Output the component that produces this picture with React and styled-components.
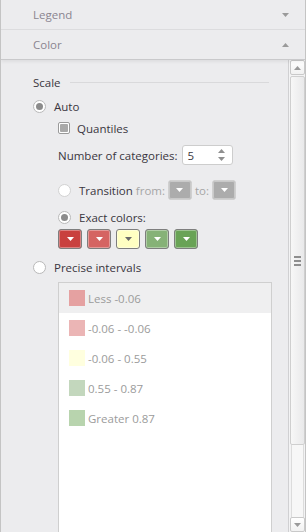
import React from 'react';
import styled, { createGlobalStyle } from 'styled-components';

const GlobalStyle = createGlobalStyle`
  html, body {
    margin: 0;
    padding: 0;
    background: #ffffff;
  }
  body {
    font-family: 'Open Sans', 'Liberation Sans', sans-serif;
    font-size: 11.5px;
  }
`;

const Frame = styled.div`
  width: 306px;
  height: 532px;
  box-sizing: border-box;
  border-left: 1px solid #c4c4c4;
  border-right: 1px solid #c4c4c4;
  background: #ececee;
  display: flex;
  flex-direction: column;
  overflow: hidden;
`;

const SectionHeader = styled.div`
  height: 29px;
  flex: none;
  display: flex;
  align-items: center;
  justify-content: space-between;
  padding: 0 16px 0 32px;
  border-bottom: 1px solid ${(p) => (p.open ? '#c9c9cb' : '#dcdcde')};
  color: #8a8590;
  font-size: 11.5px;
  box-shadow: ${(p) => (p.open ? '0 2px 3px rgba(0,0,0,0.06)' : 'none')};
  position: relative;
  z-index: 1;
`;

const Caret = ({ up }) => (
  <svg width="7" height="4" viewBox="0 0 7 4">
    <path d={up ? 'M0 4 L3.5 0 L7 4 Z' : 'M0 0 L7 0 L3.5 4 Z'} fill="#9a9a9a" />
  </svg>
);

const Body = styled.div`
  flex: 1;
  display: flex;
  min-height: 0;
`;

const Content = styled.div`
  flex: 1;
  padding: 13px 0 0 32px;
  display: flex;
  flex-direction: column;
  color: #3a3640;
`;

const GroupTitle = styled.div`
  display: flex;
  align-items: center;
  gap: 9px;
  height: 18px;
  padding-right: 19px;
  &::after {
    content: '';
    flex: 1;
    height: 1px;
    background: #d9d9db;
  }
`;

const Row = styled.div`
  display: flex;
  align-items: center;
  height: ${(p) => p.h || 20}px;
  margin-top: ${(p) => p.mt || 0}px;
  padding-left: ${(p) => p.indent || 0}px;
`;

const RadioCircle = styled.span`
  width: 11px;
  height: 11px;
  border-radius: 50%;
  border: 1px solid ${(p) => (p.disabled ? '#d2d2d2' : '#b9b9b9')};
  background: #ffffff;
  display: inline-flex;
  align-items: center;
  justify-content: center;
  margin-right: 8px;
  flex: none;
  &::after {
    content: '';
    width: 7px;
    height: 7px;
    border-radius: 50%;
    background: ${(p) => (p.checked ? '#8c8c8c' : 'transparent')};
  }
`;

const CheckBox = styled.span`
  width: 10px;
  height: 10px;
  border-radius: 2px;
  border: 1px solid #9a9a9a;
  background: #ffffff;
  display: inline-flex;
  align-items: center;
  justify-content: center;
  margin-right: 7px;
  flex: none;
  &::after {
    content: '';
    width: 8px;
    height: 8px;
    border-radius: 1px;
    background: #a9a9a9;
  }
`;

const Label = styled.span`
  color: ${(p) => (p.muted ? '#a6a6a6' : '#3a3640')};
  white-space: nowrap;
`;

const Spinner = styled.div`
  width: 51px;
  height: 20px;
  box-sizing: border-box;
  border: 1px solid #cdcdcd;
  border-radius: 3px;
  background: #ffffff;
  display: flex;
  align-items: center;
  justify-content: space-between;
  padding: 0 7px 0 5px;
  margin-left: 4px;
`;

const SpinArrows = () => (
  <svg width="7" height="12" viewBox="0 0 7 12">
    <path d="M0 4 L3.5 0 L7 4 Z" fill="#8f8f8f" />
    <path d="M0 8 L7 8 L3.5 12 Z" fill="#8f8f8f" />
  </svg>
);

const DropButton = styled.div`
  width: 24px;
  height: 20px;
  box-sizing: border-box;
  border-radius: 3px;
  border: 1px solid ${(p) => p.border || '#7e7e7e'};
  background: ${(p) => p.color};
  display: flex;
  align-items: center;
  justify-content: center;
  flex: none;
  box-shadow: inset 0 0 0 1px rgba(255, 255, 255, 0.35);
`;

const DownTri = ({ color = '#ffffff' }) => (
  <svg width="7" height="4" viewBox="0 0 7 4">
    <path d="M0 0 L7 0 L3.5 4 Z" fill={color} />
  </svg>
);

const Swatches = styled.div`
  display: flex;
  gap: 5px;
  padding-left: 25px;
  margin-top: 2px;
`;

const ListBox = styled.div`
  margin: 5px 0 0 25px;
  width: 214px;
  flex: 1;
  box-sizing: border-box;
  border: 1px solid #cfcfcf;
  border-bottom: none;
  background: #ffffff;
  display: flex;
  flex-direction: column;
`;

const ListItem = styled.div`
  height: 30px;
  display: flex;
  align-items: center;
  padding-left: 10px;
  gap: 3px;
  color: #9b9b9b;
  background: ${(p) => (p.selected ? '#efeff0' : '#ffffff')};
`;

const Square = styled.span`
  width: 16px;
  height: 16px;
  background: ${(p) => p.color};
  flex: none;
`;

const ScrollBar = styled.div`
  width: 16px;
  border-left: 1px solid #d0d0d2;
  display: flex;
  flex-direction: column;
  align-items: center;
  background: #f3f3f4;
`;

const ScrollButton = styled.div`
  width: 15px;
  height: 15px;
  box-sizing: border-box;
  border: 1px solid #c9c9c9;
  border-radius: 2px;
  background: linear-gradient(#ffffff, #f1f1f1);
  display: flex;
  align-items: center;
  justify-content: center;
  flex: none;
`;

const Thumb = styled.div`
  width: 15px;
  height: 369px;
  box-sizing: border-box;
  margin-top: 1px;
  border: 1px solid #cfcfcf;
  border-radius: 2px;
  background: linear-gradient(90deg, #f7f7f7, #e9e9ea);
  display: flex;
  flex-direction: column;
  align-items: center;
  justify-content: center;
  gap: 2px;
  flex: none;
`;

const Grip = styled.span`
  width: 7px;
  height: 2px;
  background: #8e8e8e;
`;

const Track = styled.div`
  flex: 1;
  width: 13px;
  box-sizing: border-box;
  border-left: 1px solid #dcdcdc;
  border-right: 1px solid #dcdcdc;
  background: #f7f7f7;
`;

const intervals = [
  { text: 'Less -0.06', color: '#e5a1a1', selected: true },
  { text: '-0.06 - -0.06', color: '#ebb5b5' },
  { text: '-0.06 - 0.55', color: '#ffffdf' },
  { text: '0.55 - 0.87', color: '#c3d7bd' },
  { text: 'Greater 0.87', color: '#b8d4ae' },
];

const exactColors = [
  { color: '#c9403e', tri: '#ffffff' },
  { color: '#d56462', tri: '#ffffff' },
  { color: '#ffffc2', tri: '#6a6a6a' },
  { color: '#86b277', tri: '#ffffff' },
  { color: '#69a356', tri: '#ffffff' },
];

export default function App() {
  return (
    <>
      <GlobalStyle />
      <Frame>
        <SectionHeader>
          <span>Legend</span>
          <Caret />
        </SectionHeader>
        <SectionHeader open>
          <span>Color</span>
          <Caret up />
        </SectionHeader>
        <Body>
          <Content>
            <GroupTitle>Scale</GroupTitle>
            <Row mt={5}>
              <RadioCircle checked />
              <Label>Auto</Label>
            </Row>
            <Row mt={2} indent={25}>
              <CheckBox />
              <Label>Quantiles</Label>
            </Row>
            <Row mt={6} h={22} indent={25}>
              <Label>Number of categories:</Label>
              <Spinner>
                <span>5</span>
                <SpinArrows />
              </Spinner>
            </Row>
            <Row mt={14} indent={25}>
              <RadioCircle disabled />
              <Label>Transition</Label>
              <Label muted>&nbsp;from:&nbsp;</Label>
              <DropButton color="#acacac" border="#d0d0d0">
                <DownTri />
              </DropButton>
              <Label muted>&nbsp;to:&nbsp;</Label>
              <DropButton color="#acacac" border="#d0d0d0">
                <DownTri />
              </DropButton>
            </Row>
            <Row mt={7} indent={25}>
              <RadioCircle checked />
              <Label>Exact colors:</Label>
            </Row>
            <Swatches>
              {exactColors.map((c, i) => (
                <DropButton key={i} color={c.color}>
                  <DownTri color={c.tri} />
                </DropButton>
              ))}
            </Swatches>
            <Row mt={8}>
              <RadioCircle />
              <Label>Precise intervals</Label>
            </Row>
            <ListBox>
              {intervals.map((it) => (
                <ListItem key={it.text} selected={it.selected}>
                  <Square color={it.color} />
                  <span>{it.text}</span>
                </ListItem>
              ))}
            </ListBox>
          </Content>
          <ScrollBar>
            <ScrollButton>
              <Caret up />
            </ScrollButton>
            <Thumb>
              <Grip />
              <Grip />
              <Grip />
            </Thumb>
            <Track />
            <ScrollButton>
              <Caret />
            </ScrollButton>
          </ScrollBar>
        </Body>
      </Frame>
    </>
  );
}
